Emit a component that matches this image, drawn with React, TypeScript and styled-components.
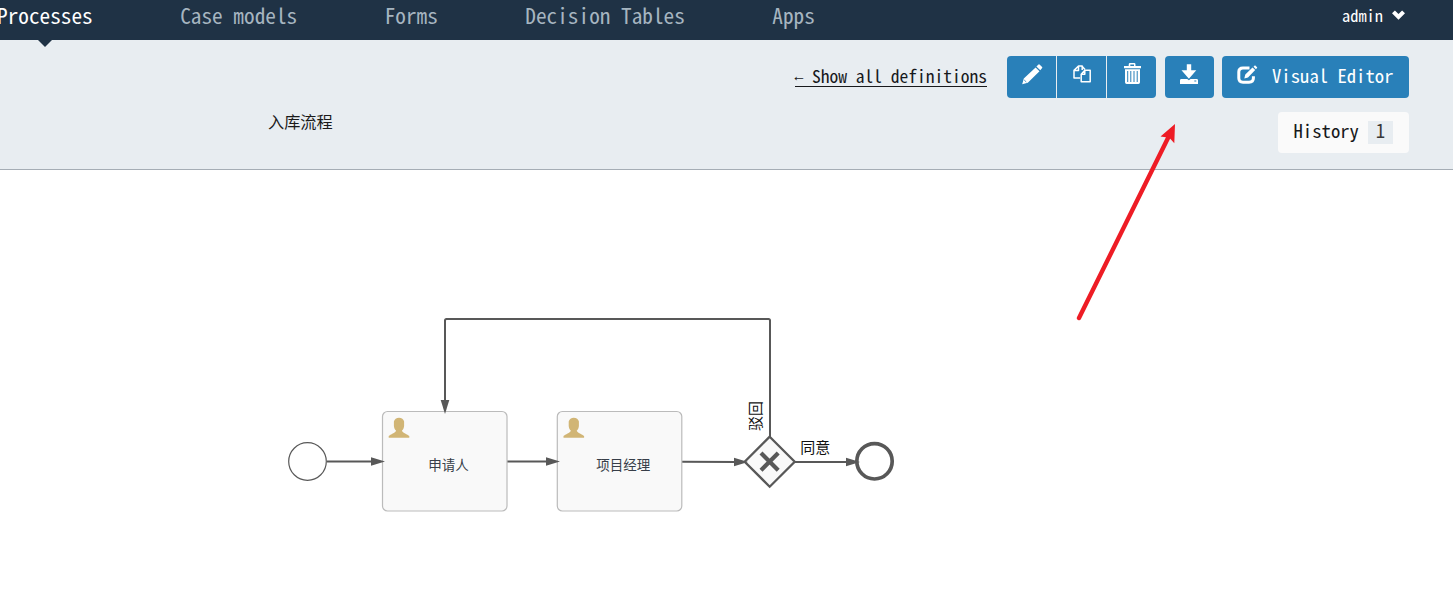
import React from "react";
import styled, { createGlobalStyle } from "styled-components";

const mono = `"Noto Sans Mono CJK SC", "Liberation Mono", monospace`;
const cjk = `"Noto Sans CJK SC", sans-serif`;

const GlobalStyle = createGlobalStyle`
  *, *::before, *::after { box-sizing: border-box; }
  html, body { margin: 0; background: #fff; overflow: hidden; }
  svg { display: block; }
`;

const Page = styled.div`
  width: 100%;
  height: 597px;
  display: flex;
  flex-direction: column;
  overflow: hidden;
  position: relative;
  font-family: ${mono};
  white-space: pre;
`;

const Navbar = styled.header`
  flex: none;
  height: 40px;
  display: flex;
  justify-content: space-between;
  background: #1f3245;
`;

const Nav = styled.nav`
  display: flex;
  gap: 87.5px;
  margin-left: -3px;
`;

const NavItem = styled.a<{ $active?: boolean }>`
  position: relative;
  height: 40px;
  font-size: 21.28px;
  line-height: 29px;
  color: ${(p) => (p.$active ? "#fff" : "#a6b5c0")};
  ${(p) =>
    p.$active &&
    `&::after {
      content: "";
      position: absolute;
      top: 100%;
      left: 50%;
      margin-left: -7px;
      border: 7.5px solid transparent;
      border-top-color: #1f3245;
      border-bottom: 0;
    }`}
`;

const Account = styled.div`
  display: flex;
  gap: 9px;
  margin-right: 48px;
  font-size: 16.4px;
  line-height: 30px;
  color: #fff;
  svg { margin-top: 10px; }
`;

const SubHeader = styled.section`
  flex: none;
  height: 130px;
  display: flex;
  justify-content: space-between;
  padding: 16px 44px 0 268px;
  background: #e8edf1;
  border-bottom: 1px solid #a5adb5;
`;

const Title = styled.h1`
  margin: 53px 0 0;
  font: 400 16.2px/24px ${cjk};
  color: #1a1a1a;
`;

const Side = styled.div`
  display: flex;
  flex-direction: column;
  align-items: flex-end;
  gap: 14px;
`;

const Actions = styled.div`
  display: flex;
  align-items: center;
`;

const BackLink = styled.a`
  display: flex;
  height: 21px;
  margin: -2px 20px 0 0;
  font-size: 17.5px;
  line-height: 20px;
  color: #17191c;
  border-bottom: 1px solid #17191c;
`;

const BackArrow = styled.span`
  width: 17.5px;
  font-family: "Liberation Mono", monospace;
  font-size: 14.6px;
  line-height: 22px;
`;

const Button = styled.button<{ $w: number; $round?: boolean }>`
  width: ${(p) => p.$w}px;
  height: 42px;
  display: flex;
  align-items: flex-start;
  padding: 7px 0 0 15px;
  border: 0;
  border-radius: ${(p) => (p.$round ? 4 : 0)}px;
  background: #2980b9;
  color: #fff;
  font: 400 18.7px/24px ${mono};
  svg { flex: none; }
`;

const ButtonGroup = styled.div`
  display: flex;
  gap: 1px;
  border-radius: 4px;
  overflow: hidden;
  margin-right: 9px;
`;

const SoloButtons = styled.div`
  display: flex;
  gap: 8px;
`;

const ButtonText = styled.span`
  margin-left: 14px;
`;

const History = styled.div`
  width: 131px;
  height: 41px;
  display: flex;
  align-items: flex-start;
  gap: 9px;
  padding: 9px 0 0 15.5px;
  border-radius: 4px;
  background: #fafafa;
  color: #17191c;
  font-size: 18.7px;
  line-height: 18px;
`;

const Count = styled.span`
  width: 25px;
  height: 23px;
  text-align: center;
  background: #e8edf1;
  color: #383838;
`;

const Canvas = styled.main`
  flex: 1;
  min-height: 0;
  svg { width: 1453px; height: 427px; }
  text { font-family: ${cjk}; }
`;

const Pointer = styled.svg`
  position: absolute;
  left: 1070px;
  top: 118px;
`;

const Icon = ({ children, w = 21 }: { children: React.ReactNode; w?: number }) => (
  <svg width={w} height="22" viewBox={`0 0 ${w} 22`} fill="currentColor">
    {children}
  </svg>
);

const Pencil = () => (
  <Icon>
    <path d="M.2 21.2 1.8 15.5 13.6 4.6 17.5 8.3 5.8 19.7ZM14.4 3.4 16.5 1.4Q17 1 17.5 1.4L20.1 3.9Q20.6 4.5 20.1 5L18.3 7.2Z" />
    <path d="m2.2 17 2.1 2" stroke="#2980b9" strokeWidth=".8" />
  </Icon>
);

const Copy = () => (
  <Icon>
    <g fill="none" stroke="currentColor" strokeWidth="1.5" strokeLinejoin="round">
      <path d="M8.2 15H2V7.4L6.5 3H10.2V7M6.5 3V7.4H2" />
      <path d="M12.8 7.3H18.2V18.7H9.2V11.2ZM12.8 7.3V11.2H9.2" />
      <path d="M10 3.2 13 6.4" />
    </g>
  </Icon>
);

const Trash = () => (
  <Icon>
    <path
      fillRule="evenodd"
      d="M2 3H6.7V1.4Q6.7 0 8 0H12.2Q13.5 0 13.5 1.4V3H19V5.2H2ZM8.3 1.6V3H12V1.6ZM3 6.2H18V19.3Q18 21 16.3 21H4.7Q3 21 3 19.3ZM5.2 8V19H6.2V8ZM8.3 8V19H9.3V8ZM11.5 8V19H12.5V8ZM14.7 8V19H15.7V8Z"
    />
  </Icon>
);

const Download = () => (
  <Icon>
    <path d="M6.8 1.2H11.2V7.2H16.3L8.9 15.8 1.5 7.2H6.8Z" />
    <path
      fillRule="evenodd"
      d="M.6 16H7.2L8.9 17.2 10.6 16H17.4L18 17.2V21H0V17.2ZM14.3 17.6V18.4H16.3V17.6Z"
    />
  </Icon>
);

const Edit = () => (
  <Icon>
    <path
      d="M12.5 5H6Q1.8 5 1.8 9V15Q1.8 19.2 6 19.2H12Q16.4 19.2 16.4 15V13.2"
      fill="none"
      stroke="currentColor"
      strokeWidth="3"
    />
    <path d="M7.3 15.5 8.3 11.6 15.5 4.5 18.2 7.1 11 14.4ZM16.5 3.7 18 2.3 20.3 4.6 19 6.2Z" />
  </Icon>
);

const ChevronDown = () => (
  <svg width="13" height="12" viewBox="0 0 13 12">
    <path d="M0 3.2 2.9.6 6.5 4.1 10.1.6 13 3.2 6.5 9.8Z" fill="#fff" />
  </svg>
);

const ink = "#585858";

const Head = ({ x, y, r = 0 }: { x: number; y: number; r?: number }) => (
  <path d="M0 0-14-4.3V4.3Z" fill={ink} transform={`translate(${x} ${y}) rotate(${r})`} />
);

const Task = ({ x, label }: { x: number; label: string }) => (
  <g transform={`translate(${x} 411.5)`}>
    <rect width="124.5" height="99.5" rx="5" fill="#f9f9f9" stroke="#bbb" strokeWidth="1.2" />
    <path
      d="M6.2 26.3V24.6C8 22.6 12.8 21.4 13.6 19.2C12.2 18 11.7 16.5 11.4 14.5V10C12 7.5 14 6.2 16.5 6.2S21.2 7.5 21.6 10V14.5C21.3 16.5 20.8 18 19.4 19.2C20.2 21.4 25 22.6 26.8 24.6V26.3Z"
      fill="#d1b575"
    />
    <text x="66" y="58" fontSize="13.5" textAnchor="middle" fill="#373e48">
      {label}
    </text>
  </g>
);

const Diagram = () => (
  <svg viewBox="0 170 1453 427">
    <g fill="none" stroke={ink} strokeWidth="2">
      <path d="M327 461.5H375M507 461.5H550M682 461.7 738 462M795 462H850" />
      <path d="M770 437V320.5Q770 319 768.5 319H446.5Q445 319 445 320.5V403" />
    </g>
    <circle cx="307.5" cy="461.5" r="18.8" fill="#fff" stroke={ink} strokeWidth="1.2" />
    <Task x={382.5} label="申请人" />
    <Task x={557.3} label="项目经理" />
    <path d="m769.7 436.7 25 25-25 25-25-25Z" fill="#f9f9f9" stroke={ink} strokeWidth="2.3" />
    <path d="m761 453 17.2 17.2m0-17.2-17.2 17.2" stroke={ink} strokeWidth="4.2" />
    <circle cx="874.5" cy="461.3" r="17.7" fill="#fff" stroke={ink} strokeWidth="3.7" />
    <Head x={385} y={461.5} />
    <Head x={560} y={461.5} />
    <Head x={748} y={462} />
    <Head x={860} y={462} />
    <Head x={445} y={414} r={90} />
    <text x="800.3" y="452.6" fontSize="15" fill="#111">
      同意
    </text>
    <text transform="translate(761 431) rotate(-90)" fontSize="15" fill="#111">
      驳回
    </text>
  </svg>
);

export default function App() {
  return (
    <Page>
      <GlobalStyle />
      <Navbar>
        <Nav>
          <NavItem $active>Processes</NavItem>
          <NavItem>Case models</NavItem>
          <NavItem>Forms</NavItem>
          <NavItem>Decision Tables</NavItem>
          <NavItem>Apps</NavItem>
        </Nav>
        <Account>
          admin
          <ChevronDown />
        </Account>
      </Navbar>
      <SubHeader>
        <Title>入库流程</Title>
        <Side>
          <Actions>
            <BackLink>
              <BackArrow>←</BackArrow>
              Show all definitions
            </BackLink>
            <ButtonGroup>
              <Button $w={49}><Pencil /></Button>
              <Button $w={49}><Copy /></Button>
              <Button $w={49}><Trash /></Button>
            </ButtonGroup>
            <SoloButtons>
              <Button $w={49} $round><Download /></Button>
              <Button $w={187} $round>
                <Edit />
                <ButtonText>Visual Editor</ButtonText>
              </Button>
            </SoloButtons>
          </Actions>
          <History>
            History
            <Count>1</Count>
          </History>
        </Side>
      </SubHeader>
      <Canvas>
        <Diagram />
      </Canvas>
      <Pointer width="120" height="210" viewBox="1070 118 120 210">
        <path d="M1079 318 1168.5 137" stroke="#ee1c25" strokeWidth="4.4" strokeLinecap="round" />
        <path d="M1175 124 1160.5 136.5 1167.5 137.5 1170 138.5 1174.3 143.3Z" fill="#ee1c25" />
      </Pointer>
    </Page>
  );
}
